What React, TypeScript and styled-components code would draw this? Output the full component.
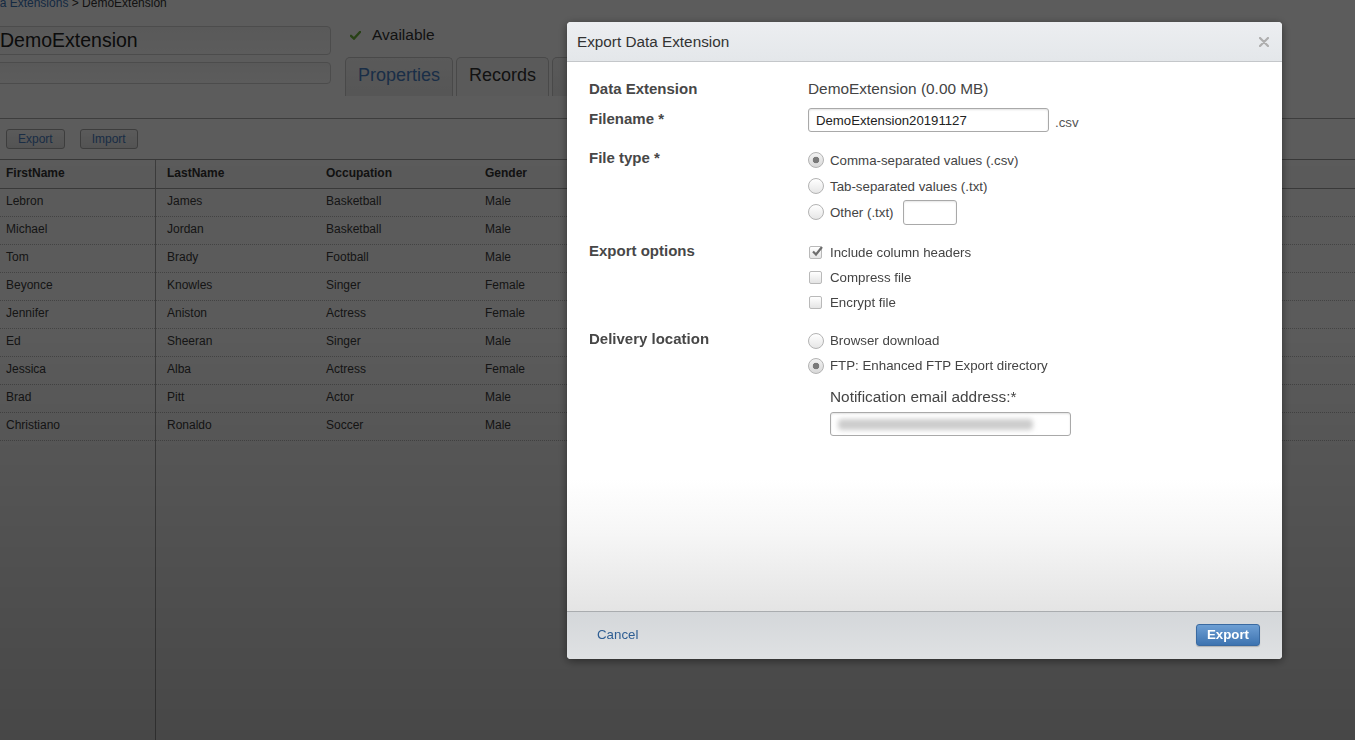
import React from "react";
import styled, { createGlobalStyle } from "styled-components";

const GlobalStyle = createGlobalStyle`
  html, body { margin: 0; padding: 0; height: 100%; overflow: hidden; background: #fff; }
  body { font-family: "Liberation Sans", Arial, Helvetica, sans-serif; }
  * { box-sizing: border-box; }
`;

/* ---------- record page behind the dialog ---------- */

const Page = styled.div`
  margin: -4px 0 0 -19px;
  width: calc(100vw + 19px);
  height: calc(100vh + 4px);
  display: flex;
  flex-direction: column;
  color: #333;
`;

const Breadcrumb = styled.div`
  font-size: 12px;
  line-height: 14px;
  white-space: nowrap;
  color: #333;
`;

const Crumb = styled.a`
  color: #3a74b8;
  text-decoration: none;
`;

const RecordHeader = styled.div`
  display: flex;
  gap: 14px;
  padding-left: 9px;
  margin-top: 16px;
`;

const NameColumn = styled.div`
  width: 341px;
  display: flex;
  flex-direction: column;
  gap: 7px;
`;

const NameField = styled.div<{ $tall?: boolean }>`
  height: ${(p) => (p.$tall ? 29 : 22)}px;
  border: 1px solid #d2d2d2;
  border-radius: 4px;
  background: linear-gradient(#f6f6f6, #ffffff);
  padding-left: 9px;
  font-size: 19.5px;
  line-height: 27px;
  color: #222;
`;

const StatusColumn = styled.div`
  display: flex;
  flex-direction: column;
  gap: 13px;
`;

const Status = styled.div`
  display: flex;
  align-items: center;
  gap: 11px;
  padding-left: 5px;
  font-size: 15.5px;
  line-height: 18px;
  color: #333;
`;

const Tabs = styled.div`
  display: flex;
  gap: 3px;
  white-space: nowrap;
`;

const Tab = styled.div<{ $active?: boolean }>`
  min-width: 40px;
  height: 39px;
  padding: 0 12px;
  border: 1px solid #c9c9c9;
  border-bottom: none;
  border-radius: 5px 5px 0 0;
  font-size: 18px;
  line-height: 35px;
  color: ${(p) => (p.$active ? "#333" : "#4a80c4")};
  background: ${(p) => (p.$active ? "#fafafa" : "linear-gradient(#f8f8f8, #ededed)")};
`;

const Toolbar = styled.div`
  margin-top: 22px;
  height: 41px;
  border-top: 1px solid #a9a9a9;
  padding: 10px 0 0 25px;
  display: flex;
  gap: 15px;
`;

const ToolButton = styled.button`
  height: 20px;
  padding: 0 11px;
  border: 1px solid #a8a8a8;
  border-radius: 3px;
  background: linear-gradient(#fbfbfb, #e6e6e6);
  font-family: inherit;
  font-size: 12px;
  color: #4a7cbf;
`;

const Grid = styled.div`
  flex: 1;
  display: flex;
  padding-left: 14px;
  border-top: 1px solid #9c9c9c;
`;

const FrozenPane = styled.div`
  width: 161px;
  flex: none;
  border-right: 1px solid #a6a6a6;
`;

const ScrollPane = styled.div`
  flex: 1;
`;

const HeadRow = styled.div<{ $frozen?: boolean }>`
  display: grid;
  grid-template-columns: ${(p) => (p.$frozen ? "1fr" : "159px 159px 159px 1fr")};
  height: 29px;
  border-bottom: 1px solid #a0a0a0;
  background: #fbfbfb;
`;

const BodyRow = styled.div<{ $frozen?: boolean }>`
  display: grid;
  grid-template-columns: ${(p) => (p.$frozen ? "1fr" : "159px 159px 159px 1fr")};
  height: 28px;
  border-bottom: 1px dotted #bdbdbd;
`;

const HeadCell = styled.div`
  padding: 6px 0 0 11px;
  font-size: 12px;
  line-height: 14px;
  font-weight: bold;
  color: #333;
`;

const Cell = styled.div`
  padding: 5px 0 0 11px;
  font-size: 12px;
  line-height: 14px;
  color: #3c3c3c;
`;

/* ---------- modal ---------- */

const Backdrop = styled.div`
  position: fixed;
  inset: 0;
  background: linear-gradient(rgba(0, 0, 0, 0.64) 0%, rgba(0, 0, 0, 0.645) 45%, rgba(0, 0, 0, 0.72) 100%);
`;

const Dialog = styled.div`
  position: fixed;
  top: 22px;
  left: 567px;
  width: 715px;
  height: 637px;
  display: flex;
  flex-direction: column;
  border-radius: 4px;
  overflow: hidden;
  background: #fff;
  box-shadow: 0 2px 10px rgba(0, 0, 0, 0.45);
  color: #444;
`;

const DialogHeader = styled.div`
  height: 40px;
  flex: none;
  display: flex;
  align-items: center;
  justify-content: space-between;
  padding: 0 11px 0 10px;
  background: linear-gradient(#eceef1, #e4e7ea);
  border-bottom: 1px solid #c4c7ca;
`;

const DialogTitle = styled.h2`
  margin: 0;
  font-size: 15.3px;
  font-weight: normal;
  color: #333;
`;

const CloseButton = styled.button`
  width: 14px;
  height: 14px;
  padding: 0;
  border: none;
  background: none;
  display: flex;
  align-items: center;
  justify-content: center;
`;

const DialogBody = styled.div`
  flex: 1;
  padding: 16px 0 0 22px;
  background: linear-gradient(#ffffff 0%, #ffffff 76%, #f6f6f6 86%, #e4e4e4 100%);
`;

const FieldRow = styled.div<{ $space: number }>`
  display: grid;
  grid-template-columns: 219px 1fr;
  margin-top: ${(p) => p.$space}px;
`;

const FieldLabel = styled.div`
  font-size: 15px;
  font-weight: bold;
  line-height: 22px;
  color: #474747;
`;

const FieldValue = styled.div`
  font-size: 15.4px;
  line-height: 21px;
  color: #444;
`;

const InlineControl = styled.div`
  display: flex;
  align-items: flex-end;
`;

const TextInput = styled.div<{ $width: number; $height?: number }>`
  width: ${(p) => p.$width}px;
  height: ${(p) => p.$height ?? 24}px;
  border: 1px solid #a9a9a9;
  border-radius: 3px;
  background: #fff;
  box-shadow: inset 0 1px 2px rgba(0, 0, 0, 0.12);
  padding: 0 7px;
  display: flex;
  align-items: center;
  font-size: 13.2px;
  color: #222;
`;

const Suffix = styled.span`
  margin-left: 6px;
  font-size: 13.3px;
  line-height: 18px;
  color: #555;
`;

const OptionList = styled.div`
  display: flex;
  flex-direction: column;
`;

const Option = styled.div<{ $h: number }>`
  display: flex;
  align-items: center;
  height: ${(p) => p.$h}px;
  font-size: 13.3px;
  color: #444;
`;

const RadioMark = styled.span<{ $on?: boolean }>`
  width: 16px;
  height: 16px;
  flex: none;
  margin-right: 6px;
  border-radius: 50%;
  border: 1px solid #b3b3b3;
  background: ${(p) =>
    p.$on
      ? "radial-gradient(circle, #7a7a7a 0 3px, transparent 3.6px), linear-gradient(#f2f2f2, #d9d9d9)"
      : "linear-gradient(#ffffff, #e6e6e6)"};
`;

const CheckMark = styled.span`
  width: 13px;
  height: 13px;
  flex: none;
  margin: 0 8px 0 1px;
  border-radius: 2px;
  border: 1px solid #b9b9b9;
  background: linear-gradient(#ffffff, #e4e4e4);
  display: flex;
  align-items: center;
  justify-content: center;
  overflow: visible;
`;

const SmallBox = styled.div`
  margin-left: 9px;
  width: 54px;
  height: 25px;
  border: 1px solid #a9a9a9;
  border-radius: 3px;
  box-shadow: inset 0 1px 2px rgba(0, 0, 0, 0.1);
`;

const NotifyBlock = styled.div`
  padding-left: 22px;
  margin-top: 9px;
`;

const NotifyLabel = styled.div`
  font-size: 15.4px;
  line-height: 20px;
  color: #444;
  margin-bottom: 5px;
`;

const Redacted = styled.span`
  width: 195px;
  height: 11px;
  background: #cdcdcd;
  border-radius: 4px;
  filter: blur(2.5px);
`;

const DialogFooter = styled.div`
  height: 48px;
  flex: none;
  display: flex;
  align-items: center;
  justify-content: space-between;
  padding: 0 22px 2px 30px;
  border-top: 1px solid #a9acaf;
  background: linear-gradient(#d4d7da, #dfe1e3);
`;

const CancelLink = styled.a`
  font-size: 13.3px;
  color: #2e5e93;
  text-decoration: none;
`;

const PrimaryButton = styled.button`
  width: 64px;
  height: 22px;
  border: 1px solid #3a6aa1;
  border-radius: 3px;
  background: linear-gradient(#6e9fd4, #3d73b0);
  box-shadow: 0 1px 1px rgba(0, 0, 0, 0.2);
  color: #fff;
  font-family: inherit;
  font-size: 13.3px;
  font-weight: bold;
`;

/* ---------- data ---------- */

const people = [
  ["Lebron", "James", "Basketball", "Male"],
  ["Michael", "Jordan", "Basketball", "Male"],
  ["Tom", "Brady", "Football", "Male"],
  ["Beyonce", "Knowles", "Singer", "Female"],
  ["Jennifer", "Aniston", "Actress", "Female"],
  ["Ed", "Sheeran", "Singer", "Male"],
  ["Jessica", "Alba", "Actress", "Female"],
  ["Brad", "Pitt", "Actor", "Male"],
  ["Christiano", "Ronaldo", "Soccer", "Male"],
];

const GreenCheck = () => (
  <svg width="11" height="9" viewBox="0 0 11 9">
    <path d="M1 4.8 L4 7.6 L10 1" fill="none" stroke="#6fb43f" strokeWidth="2.4" strokeLinecap="round" />
  </svg>
);

const Radio = ({ on, label, h, children }: { on?: boolean; label: string; h: number; children?: React.ReactNode }) => (
  <Option $h={h}>
    <RadioMark $on={on} />
    {label}
    {children}
  </Option>
);

const Check = ({ on, label }: { on?: boolean; label: string }) => (
  <Option $h={25}>
    <CheckMark>
      {on && (
        <svg width="12" height="11" viewBox="0 0 12 11" style={{ marginTop: -3, marginRight: -2 }}>
          <path d="M2 5.5 L5 8.5 L11 1" fill="none" stroke="#6d6d6d" strokeWidth="2.2" />
        </svg>
      )}
    </CheckMark>
    {label}
  </Option>
);

export default function App() {
  return (
    <>
      <GlobalStyle />
      <Page>
        <Breadcrumb>
          <Crumb>Data Extensions</Crumb> &gt; DemoExtension
        </Breadcrumb>
        <RecordHeader>
          <NameColumn>
            <NameField $tall>DemoExtension</NameField>
            <NameField />
          </NameColumn>
          <StatusColumn>
            <Status>
              <GreenCheck />
              Available
            </Status>
            <Tabs>
              <Tab>Properties</Tab>
              <Tab $active>Records</Tab>
              <Tab />
            </Tabs>
          </StatusColumn>
        </RecordHeader>
        <Toolbar>
          <ToolButton>Export</ToolButton>
          <ToolButton>Import</ToolButton>
        </Toolbar>
        <Grid>
          <FrozenPane>
            <HeadRow $frozen>
              <HeadCell>FirstName</HeadCell>
            </HeadRow>
            {people.map((p) => (
              <BodyRow $frozen key={p[0]}>
                <Cell>{p[0]}</Cell>
              </BodyRow>
            ))}
          </FrozenPane>
          <ScrollPane>
            <HeadRow>
              <HeadCell>LastName</HeadCell>
              <HeadCell>Occupation</HeadCell>
              <HeadCell>Gender</HeadCell>
              <HeadCell />
            </HeadRow>
            {people.map((p) => (
              <BodyRow key={p[0]}>
                <Cell>{p[1]}</Cell>
                <Cell>{p[2]}</Cell>
                <Cell>{p[3]}</Cell>
                <Cell />
              </BodyRow>
            ))}
          </ScrollPane>
        </Grid>
      </Page>

      <Backdrop />

      <Dialog role="dialog" aria-label="Export Data Extension">
        <DialogHeader>
          <DialogTitle>Export Data Extension</DialogTitle>
          <CloseButton aria-label="Close">
            <svg width="10" height="10" viewBox="0 0 10 10">
              <path d="M1 1 L9 9 M9 1 L1 9" stroke="#aeaeae" strokeWidth="2.2" strokeLinecap="round" />
            </svg>
          </CloseButton>
        </DialogHeader>

        <DialogBody>
          <FieldRow $space={0}>
            <FieldLabel>Data Extension</FieldLabel>
            <FieldValue>DemoExtension (0.00 MB)</FieldValue>
          </FieldRow>

          <FieldRow $space={8}>
            <FieldLabel>Filename *</FieldLabel>
            <InlineControl>
              <TextInput $width={241}>DemoExtension20191127</TextInput>
              <Suffix>.csv</Suffix>
            </InlineControl>
          </FieldRow>

          <FieldRow $space={15}>
            <FieldLabel>File type *</FieldLabel>
            <OptionList>
              <Radio on label="Comma-separated values (.csv)" h={26} />
              <Radio label="Tab-separated values (.txt)" h={26} />
              <Radio label="Other (.txt)" h={26}>
                <SmallBox />
              </Radio>
            </OptionList>
          </FieldRow>

          <FieldRow $space={15}>
            <FieldLabel>Export options</FieldLabel>
            <OptionList>
              <Check on label="Include column headers" />
              <Check label="Compress file" />
              <Check label="Encrypt file" />
            </OptionList>
          </FieldRow>

          <FieldRow $space={13}>
            <FieldLabel>Delivery location</FieldLabel>
            <OptionList>
              <Radio label="Browser download" h={25} />
              <Radio on label="FTP: Enhanced FTP Export directory" h={25} />
              <NotifyBlock>
                <NotifyLabel>Notification email address:*</NotifyLabel>
                <TextInput $width={241}>
                  <Redacted />
                </TextInput>
              </NotifyBlock>
            </OptionList>
          </FieldRow>
        </DialogBody>

        <DialogFooter>
          <CancelLink>Cancel</CancelLink>
          <PrimaryButton>Export</PrimaryButton>
        </DialogFooter>
      </Dialog>
    </>
  );
}
